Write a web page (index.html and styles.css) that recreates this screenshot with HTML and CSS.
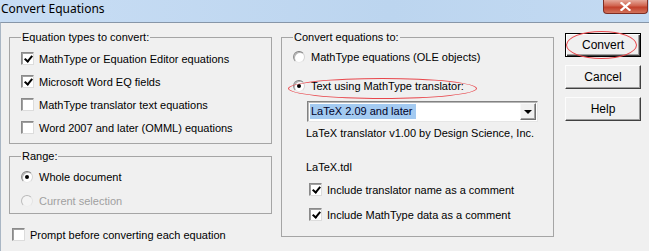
FILE: index.html
```html
<!DOCTYPE html>
<html lang="en">
<head>
  <meta charset="UTF-8" />
  <title>Convert Equations</title>
  <link rel="stylesheet" href="styles.css">
</head>
<body>
  <div class="window">
    <div class="titlebar">
      <span class="title">Convert Equations</span>
      <span class="close" aria-label="Close">
        <svg width="11" height="9" viewBox="0 0 11 9" aria-hidden="true">
          <path d="M1.5 1 L9.5 8 M9.5 1 L1.5 8" stroke="#ffffff" stroke-width="2.2" stroke-linecap="square"/>
        </svg>
      </span>
    </div>

    <div class="client">
      <div class="col-left">
        <fieldset class="group types">
          <legend>Equation types to convert:</legend>
          <div class="opt"><span class="box checked"></span>MathType or Equation Editor equations</div>
          <div class="opt"><span class="box checked"></span>Microsoft Word EQ fields</div>
          <div class="opt"><span class="box"></span>MathType translator text equations</div>
          <div class="opt"><span class="box"></span>Word 2007 and later (OMML) equations</div>
        </fieldset>

        <fieldset class="group range">
          <legend>Range:</legend>
          <div class="opt tall"><span class="radio on"></span>Whole document</div>
          <div class="opt tall disabled"><span class="radio"></span>Current selection</div>
        </fieldset>

        <div class="opt prompt"><span class="box"></span>Prompt before converting each equation</div>
      </div>

      <fieldset class="group target">
        <legend>Convert equations to:</legend>
        <div class="opt first"><span class="radio"></span>MathType equations (OLE objects)</div>
        <div class="opt second"><span class="radio on"></span>Text using MathType translator:</div>
        <div class="combo">
          <span class="combo-value">LaTeX 2.09 and later</span>
          <span class="combo-btn"><span class="arrow"></span></span>
        </div>
        <div class="info">LaTeX translator v1.00 by Design Science, Inc.</div>
        <div class="info file">LaTeX.tdl</div>
        <div class="opt sub"><span class="box checked"></span>Include translator name as a comment</div>
        <div class="opt sub"><span class="box checked"></span>Include MathType data as a comment</div>
        <span class="mark mark-text"></span>
      </fieldset>

      <div class="buttons">
        <div class="btn default">Convert<span class="mark mark-btn"></span></div>
        <div class="btn">Cancel</div>
        <div class="btn">Help</div>
      </div>
    </div>
  </div>
</body>
</html>
```

FILE: styles.css
```css
* {
  box-sizing: border-box;
}

body {
  margin: 0;
  background: #f0f0f0;
  font-family: 'Liberation Sans', Arial, sans-serif;
  font-size: 11px;
  color: #000;
}

.window {
  width: 649px;
  height: 251px;
  overflow: hidden;
  background: #f0f0f0;
}

/* title bar */
.titlebar {
  height: 22px;
  display: flex;
  justify-content: space-between;
  align-items: flex-start;
  background: linear-gradient(to right, #c8ddf4, #bcd5ef 60%, #c3daf2);
}

.title {
  font-family: 'Noto Sans', 'Open Sans', sans-serif;
  font-size: 12px;
  line-height: 17px;
  padding-left: 1px;
  color: #000;
}

.close {
  width: 45px;
  height: 14px;
  margin-right: 1px;
  display: flex;
  align-items: center;
  justify-content: center;
  border: 1px solid #7e2e24;
  border-top: none;
  border-radius: 0 0 4px 4px;
  background: linear-gradient(#e5a89a, #d0634e 45%, #c2402b 55%, #d2735c);
}

/* client area */
.client {
  height: 229px;
  border-top: 1px solid #8796a8;
  border-left: 1px solid #a9b6c4;
  display: flex;
  align-items: flex-start;
  padding: 7px 0 0 8px;
}

.col-left {
  width: 263px;
  display: flex;
  flex-direction: column;
}

.group {
  margin: 0;
  border: 1px solid #a5a5a5;
  padding: 0 0 0 11px;
  min-width: 0;
}

.group legend {
  padding: 0 1px;
  line-height: 14px;
}

.types {
  padding-top: 3px;
  padding-bottom: 4px;
}

.range {
  margin-top: 5px;
  padding-top: 2px;
  padding-bottom: 0;
}

.opt {
  height: 23px;
  display: flex;
  align-items: center;
  gap: 5px;
  white-space: nowrap;
}

.opt.tall {
  height: 24px;
}

.opt.disabled {
  color: #a0a0a0;
}

.prompt {
  margin-top: 9px;
  padding-left: 3px;
}

/* check box */
.box {
  width: 13px;
  height: 13px;
  flex: none;
  background: #fff;
  border: 1px solid;
  border-color: #8a8a8a #dcdcdc #dcdcdc #8a8a8a;
  box-shadow: inset 1px 1px 0 #a0a0a0;
  position: relative;
}

.box.checked::after {
  content: "";
  position: absolute;
  border: solid #000;
  border-width: 0 2px 2px 0;
  width: 3px;
  height: 6px;
  left: 4px;
  top: 1px;
  transform: rotate(40deg);
}

/* radio button */
.radio {
  width: 12px;
  height: 12px;
  flex: none;
  border-radius: 50%;
  background: #fff;
  border: 1px solid;
  border-color: #7c7c7c #d4d4d4 #e8e8e8 #8c8c8c;
  box-shadow: inset 1px 1px 0 #b4b4b4;
  position: relative;
  margin-right: 1px;
}

.radio.on::after {
  content: "";
  position: absolute;
  left: 3px;
  top: 3px;
  width: 4px;
  height: 4px;
  border-radius: 50%;
  background: #000;
}

.disabled .radio {
  background: #f4f4f4;
  border-color: #b8b8b8 #e4e4e4 #eeeeee #bcbcbc;
  box-shadow: none;
}

/* right-hand group */
.target {
  width: 273px;
  height: 207px;
  margin-left: 9px;
  padding-top: 1px;
  position: relative;
}

.target .opt.second {
  height: 24px;
  margin-top: 6px;
}

.combo {
  width: 231px;
  height: 21px;
  margin: 3px 0 0 14px;
  display: flex;
  align-items: center;
  justify-content: space-between;
  background: #fff;
  border: 1px solid;
  border-color: #828282 #e6e6e6 #e6e6e6 #828282;
  box-shadow: inset 1px 1px 0 #b8b8b8;
  padding: 1px 1px 1px 2px;
}

.combo-value {
  background: #a3caf1;
  padding: 0 3px 0 1px;
  line-height: 15px;
  color: #000028;
}

.combo-btn {
  width: 16px;
  height: 17px;
  display: flex;
  align-items: center;
  justify-content: center;
  background: #f0f0f0;
  border: 1px solid;
  border-color: #f8f8f8 #6f6f6f #6f6f6f #f8f8f8;
  box-shadow: inset -1px -1px 0 #a0a0a0;
}

.arrow {
  width: 0;
  height: 0;
  border-left: 4px solid transparent;
  border-right: 4px solid transparent;
  border-top: 4px solid #000;
}

.info {
  margin: 3px 0 0 13px;
  line-height: 16px;
}

.info.file {
  margin-top: 18px;
}

.opt.sub {
  margin-left: 16px;
  height: 25px;
}

.info.file + .opt.sub {
  margin-top: 2px;
}

/* command buttons */
.buttons {
  width: 76px;
  margin: 3px 0 0 11px;
  display: flex;
  flex-direction: column;
  gap: 8px;
}

.btn {
  height: 24px;
  display: flex;
  align-items: center;
  justify-content: center;
  background: #f0f0f0;
  border: 1px solid;
  border-color: #fcfcfc #404040 #404040 #fcfcfc;
  box-shadow: inset -1px -1px 0 #a0a0a0;
  font-size: 12px;
  position: relative;
}

.btn.default {
  border: 1px solid #000;
  box-shadow: inset 1px 1px 0 #fff, inset -1px -1px 0 #404040, inset -2px -2px 0 #a0a0a0;
}

/* red annotation ellipses */
.mark {
  position: absolute;
  border: 1px solid #e8474c;
  border-radius: 50%;
  pointer-events: none;
}

.mark-text {
  left: 6px;
  top: 34px;
  width: 189px;
  height: 21px;
}

.mark-btn {
  left: 0;
  top: -3px;
  width: 71px;
  height: 28px;
}
```
